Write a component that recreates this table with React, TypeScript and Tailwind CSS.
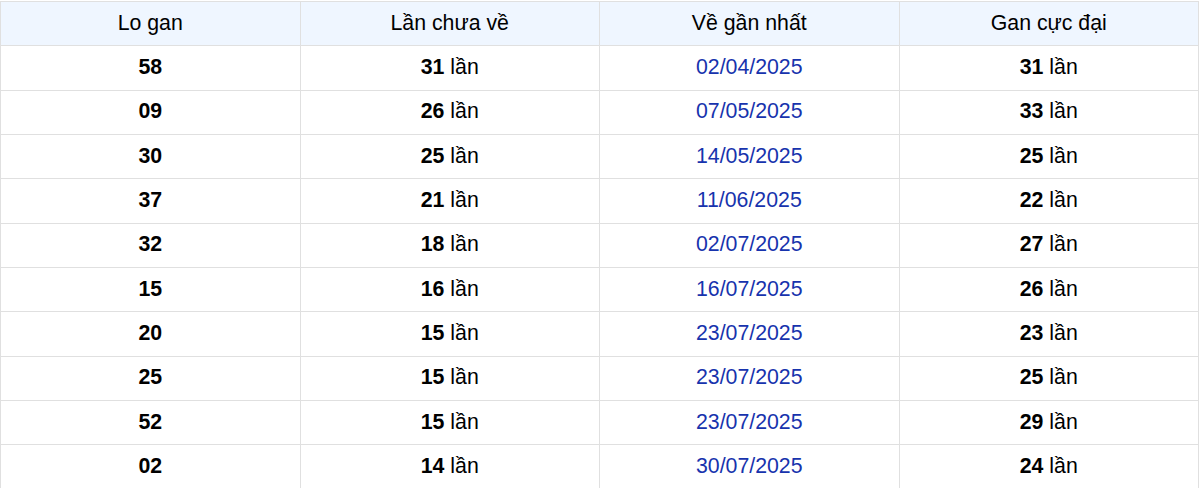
import React from "react";

const rows: [string, string, string, string][] = [
  ["58", "31", "02/04/2025", "31"],
  ["09", "26", "07/05/2025", "33"],
  ["30", "25", "14/05/2025", "25"],
  ["37", "21", "11/06/2025", "22"],
  ["32", "18", "02/07/2025", "27"],
  ["15", "16", "16/07/2025", "26"],
  ["20", "15", "23/07/2025", "23"],
  ["25", "15", "23/07/2025", "25"],
  ["52", "15", "23/07/2025", "29"],
  ["02", "14", "30/07/2025", "24"],
];

export default function App() {
  return (
    <div
      className="w-[1200px] h-[488px] overflow-hidden bg-white pt-px"
      style={{ fontFamily: '"Liberation Sans", Arial, sans-serif' }}
    >
      <table className="w-[1199px] border-collapse table-fixed text-[21.3px] text-black">
        <thead>
          <tr className="bg-[#eff6ff] h-[44.33px]">
            {["Lo gan", "Lần chưa về", "Về gần nhất", "Gan cực đại"].map((h) => (
              <th key={h} className="border border-[#e0e0e0] font-normal text-center p-0 w-1/4">
                {h}
              </th>
            ))}
          </tr>
        </thead>
        <tbody>
          {rows.map((r, i) => (
            <tr key={i} className="h-[44.33px]">
              <td className="border border-[#e0e0e0] text-center font-bold p-0">{r[0]}</td>
              <td className="border border-[#e0e0e0] text-center p-0">
                <b>{r[1]}</b> lần
              </td>
              <td className="border border-[#e0e0e0] text-center p-0 text-[#1733ad]">{r[2]}</td>
              <td className="border border-[#e0e0e0] text-center p-0">
                <b>{r[3]}</b> lần
              </td>
            </tr>
          ))}
        </tbody>
      </table>
    </div>
  );
}
